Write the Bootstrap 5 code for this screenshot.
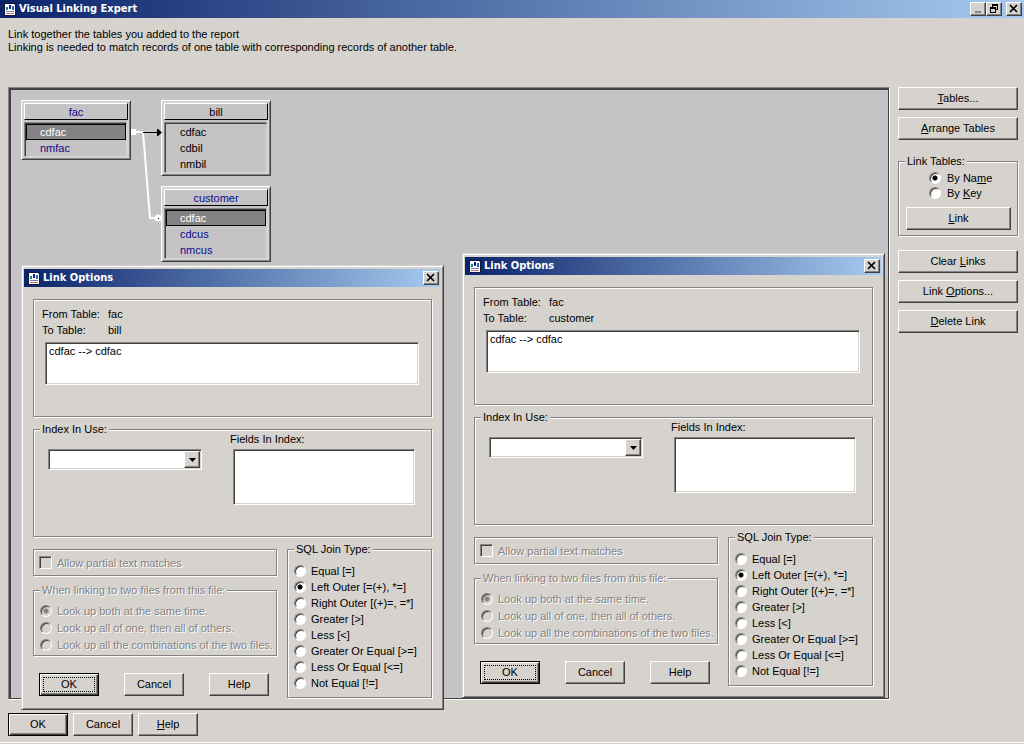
<!DOCTYPE html>
<html lang="en">
<head>
<meta charset="utf-8">
<meta name="viewport" content="width=device-width, initial-scale=1">
<title>Visual Linking Expert</title>
<link href="https://cdn.jsdelivr.net/npm/bootstrap@5.3.0/dist/css/bootstrap.min.css" rel="stylesheet">
<style>
:root { --face:#d6d3ce; --shade:#848284; --dark:#424142; --canvas:#c6c3c6; --navy:#0a0a8c; }
body { background:var(--face); color:#000; font:11px/14px "Liberation Sans", Arial, sans-serif; }
u { text-underline-offset:1px; }

/* title bars */
.title-bar { height:18px; background:linear-gradient(90deg,#0a246a,#a6caf0); color:#fff; font:bold 11px/18px "DejaVu Sans Condensed", sans-serif; }
.app-bar { padding:0 2px 0 4px; }
.title-icon { width:12px; height:13px; flex:none; margin-right:3px; }
.cap-btn { width:16px; height:14px; padding:0; border:1px solid; border-color:#fff var(--dark) var(--dark) #fff; background:var(--face); box-shadow:inset -1px -1px 0 var(--shade); display:flex; align-items:center; justify-content:center; }
.cap-btn svg { width:10px; height:10px; }

/* push buttons */
.push { height:23px; padding:0 4px; border:1px solid; border-color:#fff var(--dark) var(--dark) #fff; border-radius:0; background:var(--face); box-shadow:inset -1px -1px 0 var(--shade); color:#000; font:inherit; line-height:19px; text-align:center; }
.push-default { border-color:#000; box-shadow:inset 1px 1px 0 #fff, inset -1px -1px 0 var(--dark), inset -2px -2px 0 var(--shade); }
.push-focus { outline:1px dotted #000; outline-offset:-5px; }
.w-push { width:60px; }

/* etched frames */
.frame { min-width:0; margin:0; padding:0; border:1px solid var(--shade); box-shadow:1px 1px 0 #fff, inset 1px 1px 0 #fff; }
.frame > legend { float:none; width:auto; margin:0 0 0 6px; padding:0 2px; font:inherit; background:var(--face); }

/* sunken fields */
.sunken { border:1px solid; border-color:var(--shade) #fff #fff var(--shade); border-radius:0; background:#fff; box-shadow:inset 1px 1px 0 var(--dark), inset -1px -1px 0 var(--face); color:#000; font:inherit; appearance:none; outline:0; resize:none; display:block; }

/* radios and tick box */
.opt { display:flex; align-items:center; height:16px; gap:5px; }
.radio-dot { appearance:none; flex:none; width:12px; height:12px; margin:0; border:1px solid; border-color:var(--shade) #fff #fff var(--shade); border-radius:50%; background:#fff; box-shadow:inset 1px 1px 0 var(--dark); }
.radio-dot:checked { background:radial-gradient(circle at 50% 50%,#000 2px,#fff 3px); }
.radio-dot:disabled { background:var(--face); }
.radio-dot:disabled:checked { background:radial-gradient(circle at 50% 50%,var(--shade) 2px,var(--face) 3px); }
.tick { appearance:none; flex:none; width:13px; height:13px; margin:0; border:1px solid; border-color:var(--shade) #fff #fff var(--shade); box-shadow:inset 1px 1px 0 var(--dark); background:var(--face); }
.greyed { color:var(--shade); text-shadow:1px 1px 0 #fff; }

/* main areas */
.intro { padding:10px 8px 0; height:69px; line-height:13px; }
.workspace { padding:0 6px 0 8px; gap:8px; }
.board { min-height:613px; border:1px solid; border-color:var(--shade) #fff #fff var(--shade); box-shadow:inset 2px 2px 0 var(--dark), inset -1px -1px 0 var(--dark); background:var(--canvas); }
.side { width:120px; flex:none; gap:7px; }
.link-box { margin:7px 0; height:82px; }
.link-box .opt { height:15px; padding-left:30px; gap:6px; }
.link-box .push { width:calc(100% - 13px); margin:7px 0 0 7px; }
.link-box .choices { padding-top:2px; }
.footer-bar { padding:13px 8px 6px; border-bottom:1px solid #fff; margin-bottom:1px; gap:5px; }

/* table nodes on the board */
.node { position:absolute; width:110px; padding:2px; background:var(--canvas); border:1px solid; border-color:#fff var(--dark) var(--dark) #fff; box-shadow:inset 1px 1px 0 #d6d3ce, inset -1px -1px 0 var(--shade), inset 2px 2px 0 #d6d3ce, inset -3px -3px 0 #d6d3ce; color:#000; }
.node-own { color:var(--navy); }
.node-head { height:17px; border:1px solid; border-color:#fff #000 #000 #fff; line-height:16px; text-align:center; }
.node-list { list-style:none; margin:3px 1px 0; padding:0; border:1px solid; border-color:var(--dark) #d6d3ce #d6d3ce var(--dark); box-shadow:-1px -1px 0 var(--shade); }
.node-list li { height:16px; line-height:17px; padding-left:14px; }
.node-list .picked { background:var(--shade); color:#fff; outline:1px solid #000; outline-offset:-1px; }
.wires { position:absolute; left:1px; top:1px; width:280px; height:180px; }
.at-fac { left:12px; top:12px; } .at-bill { left:152px; top:12px; } .at-customer { left:152px; top:98px; }

/* dialogs floating over the board */
.dialog { position:absolute; width:423px; padding:2px; background:var(--face); border:1px solid; border-color:var(--face) var(--dark) var(--dark) var(--face); box-shadow:inset 1px 1px 0 #fff, inset -1px -1px 0 var(--shade); }
.at-left { left:12px; top:177px; } .at-right { left:453px; top:165px; }
.dialog .title-bar { margin:1px 1px 0 0; padding:0 1px 0 4px; }
.dialog-body { padding:12px 9px 9px; }
.pair-box { height:118px; padding:6px 12px 0 8px; }
.pair-box dl { display:grid; grid-template-columns:66px 1fr; line-height:16px; margin:0 0 4px; }
.pair-box dt { font-weight:normal; } .pair-box dd { margin:0; }
.pair-list { width:100%; height:43px; padding:0 3px; line-height:16px; }
.pair-wrap { padding-left:3px; }
.index-box { height:115px; margin-top:5px; }
.combo { width:154px; height:21px; padding:0; }
.combo-wrap { position:relative; margin:13px 0 0 14px; }
.combo-arrow { position:absolute; right:2px; top:2px; width:16px; height:17px; border:1px solid; border-color:#fff var(--dark) var(--dark) #fff; background:var(--face); box-shadow:inset -1px -1px 0 var(--shade); pointer-events:none; display:flex; align-items:center; justify-content:center; }
.fields-label { margin:-4px 0 3px -3px; }
.fields-list { width:182px; height:56px; padding:1px 4px; }
.lower { margin-top:5px; gap:10px; }
.partial { height:27px; margin-top:7px; padding:0 5px; }
.lookups { height:73px; margin-top:7px; }
.look-list { padding:5px 0 0 6px; }
.look-list .opt { height:17px; }
.dialog-buttons { padding:17px 8px 0 6px; }
.joins { width:145px; height:156px; }
.join-list { padding:7px 0 0 6px; }
</style>
</head>
<body class="d-flex flex-column min-vh-100">

<svg class="d-none">
  <symbol id="report-icon" viewBox="0 0 12 13"><path d="M0 0h12v13H0z" fill="#101840"/><path d="M1 1h9l1 1v10H1z" fill="#fff"/><path d="M2 4h2v3H2z" fill="#088a8a"/><path d="M5 2h2v4H5z" fill="#1020a0"/><path d="M8 3h2v4H8z" fill="#2468b0"/><path d="M2 8h8v1H2z" fill="#8478a8"/><path d="M2 10h8v1H2z" fill="#b87878"/></symbol>
  <symbol id="close-icon" viewBox="0 0 10 10"><path d="M1 1l7 7M8 1l-7 7" stroke="#000" stroke-width="1.700"/></symbol>
  <symbol id="drop-icon" viewBox="0 0 7 4"><path d="M0 0h7L3.500 4z"/></symbol>
</svg>

<header class="title-bar app-bar d-flex align-items-center">
  <svg class="title-icon"><use href="#report-icon"/></svg>
  <span class="flex-grow-1">Visual Linking Expert</span>
  <button type="button" class="cap-btn" aria-label="Minimize"><svg viewBox="0 0 10 10"><path d="M2 7h6v2H2z" fill="#848284"/></svg></button>
  <button type="button" class="cap-btn me-1" aria-label="Restore"><svg viewBox="0 0 10 10"><path d="M3 0h6v6H7V5h1V2H4v1H3zM1 3h6v6H1zM2 5v3h4V5z" fill-rule="evenodd"/></svg></button>
  <button type="button" class="cap-btn" aria-label="Close"><svg><use href="#close-icon"/></svg></button>
</header>

<div class="intro">
  <p class="m-0">Link together the tables you added to the report</p>
  <p class="m-0">Linking is needed to match records of one table with corresponding records of another table.</p>
</div>

<main class="workspace d-flex flex-grow-1">
  <section class="board flex-grow-1 position-relative">
    <div class="node node-own at-fac">
      <div class="node-head">fac</div>
      <ul class="node-list"><li class="picked">cdfac</li><li>nmfac</li></ul>
    </div>
    <div class="node at-bill">
      <div class="node-head">bill</div>
      <ul class="node-list"><li>cdfac</li><li>cdbil</li><li>nmbil</li></ul>
    </div>
    <div class="node node-own at-customer">
      <div class="node-head">customer</div>
      <ul class="node-list"><li class="picked">cdfac</li><li>cdcus</li><li>nmcus</li></ul>
    </div>
    <svg class="wires" viewBox="0 0 280 180">
      <path d="M121 40h5v6h-5z" fill="#fff"/>
      <path d="M125 43h8l7 86h6" fill="none" stroke="#fff" stroke-width="2"/>
      <path d="M133 43.500h15" stroke="#000"/>
      <path d="M147 40h1l4 3.500-4 3.500h-1z"/>
      <circle cx="148" cy="129" r="3.500" fill="#fff"/><path d="M148 129h1v1h-1z"/>
    </svg>

    <form class="dialog at-left">
      <div class="title-bar d-flex align-items-center">
        <svg class="title-icon"><use href="#report-icon"/></svg>
        <span class="flex-grow-1">Link Options</span>
        <button type="button" class="cap-btn" aria-label="Close"><svg><use href="#close-icon"/></svg></button>
      </div>
      <div class="dialog-body">
        <div class="frame pair-box">
          <dl><dt>From Table:</dt><dd>fac</dd><dt>To Table:</dt><dd>bill</dd></dl>
          <div class="pair-wrap"><textarea class="sunken pair-list" aria-label="Linked fields" readonly>cdfac --&gt; cdfac</textarea></div>
        </div>
        <fieldset class="frame index-box">
          <legend>Index In Use:</legend>
          <div class="d-flex justify-content-between align-items-start pe-3">
            <div class="combo-wrap">
              <select class="sunken combo" aria-label="Index in use"><option></option></select>
              <span class="combo-arrow"><svg width="7" height="4"><use href="#drop-icon"/></svg></span>
            </div>
            <div>
              <label class="fields-label d-block" for="fields-a">Fields In Index:</label>
              <textarea class="sunken fields-list" id="fields-a" readonly></textarea>
            </div>
          </div>
        </fieldset>
        <div class="lower d-flex">
          <div class="flex-grow-1">
            <div class="frame partial d-flex align-items-center">
              <label class="opt greyed"><input class="tick" type="checkbox" disabled>Allow partial text matches</label>
            </div>
            <fieldset class="frame lookups greyed" disabled>
              <legend>When linking to two files from this file:</legend>
              <div class="look-list">
                <label class="opt"><input class="radio-dot" type="radio" name="look" checked>Look up both at the same time.</label>
                <label class="opt"><input class="radio-dot" type="radio" name="look">Look up all of one, then all of others.</label>
                <label class="opt"><input class="radio-dot" type="radio" name="look">Look up all the combinations of the two files.</label>
              </div>
            </fieldset>
            <div class="dialog-buttons d-flex justify-content-between">
              <button type="button" class="push push-default push-focus w-push">OK</button>
              <button type="button" class="push w-push">Cancel</button>
              <button type="button" class="push w-push">Help</button>
            </div>
          </div>
          <fieldset class="frame joins">
            <legend>SQL Join Type:</legend>
            <div class="join-list">
              <label class="opt"><input class="radio-dot" type="radio" name="join">Equal [=]</label>
              <label class="opt"><input class="radio-dot" type="radio" name="join" checked>Left Outer [=(+), *=]</label>
              <label class="opt"><input class="radio-dot" type="radio" name="join">Right Outer [(+)=, =*]</label>
              <label class="opt"><input class="radio-dot" type="radio" name="join">Greater [&gt;]</label>
              <label class="opt"><input class="radio-dot" type="radio" name="join">Less [&lt;]</label>
              <label class="opt"><input class="radio-dot" type="radio" name="join">Greater Or Equal [&gt;=]</label>
              <label class="opt"><input class="radio-dot" type="radio" name="join">Less Or Equal [&lt;=]</label>
              <label class="opt"><input class="radio-dot" type="radio" name="join">Not Equal [!=]</label>
            </div>
          </fieldset>
        </div>
      </div>
    </form>

    <form class="dialog at-right">
      <div class="title-bar d-flex align-items-center">
        <svg class="title-icon"><use href="#report-icon"/></svg>
        <span class="flex-grow-1">Link Options</span>
        <button type="button" class="cap-btn" aria-label="Close"><svg><use href="#close-icon"/></svg></button>
      </div>
      <div class="dialog-body">
        <div class="frame pair-box">
          <dl><dt>From Table:</dt><dd>fac</dd><dt>To Table:</dt><dd>customer</dd></dl>
          <div class="pair-wrap"><textarea class="sunken pair-list" aria-label="Linked fields" readonly>cdfac --&gt; cdfac</textarea></div>
        </div>
        <fieldset class="frame index-box">
          <legend>Index In Use:</legend>
          <div class="d-flex justify-content-between align-items-start pe-3">
            <div class="combo-wrap">
              <select class="sunken combo" aria-label="Index in use"><option></option></select>
              <span class="combo-arrow"><svg width="7" height="4"><use href="#drop-icon"/></svg></span>
            </div>
            <div>
              <label class="fields-label d-block" for="fields-b">Fields In Index:</label>
              <textarea class="sunken fields-list" id="fields-b" readonly></textarea>
            </div>
          </div>
        </fieldset>
        <div class="lower d-flex">
          <div class="flex-grow-1">
            <div class="frame partial d-flex align-items-center">
              <label class="opt greyed"><input class="tick" type="checkbox" disabled>Allow partial text matches</label>
            </div>
            <fieldset class="frame lookups greyed" disabled>
              <legend>When linking to two files from this file:</legend>
              <div class="look-list">
                <label class="opt"><input class="radio-dot" type="radio" name="look" checked>Look up both at the same time.</label>
                <label class="opt"><input class="radio-dot" type="radio" name="look">Look up all of one, then all of others.</label>
                <label class="opt"><input class="radio-dot" type="radio" name="look">Look up all the combinations of the two files.</label>
              </div>
            </fieldset>
            <div class="dialog-buttons d-flex justify-content-between">
              <button type="button" class="push push-default push-focus w-push">OK</button>
              <button type="button" class="push w-push">Cancel</button>
              <button type="button" class="push w-push">Help</button>
            </div>
          </div>
          <fieldset class="frame joins">
            <legend>SQL Join Type:</legend>
            <div class="join-list">
              <label class="opt"><input class="radio-dot" type="radio" name="join">Equal [=]</label>
              <label class="opt"><input class="radio-dot" type="radio" name="join" checked>Left Outer [=(+), *=]</label>
              <label class="opt"><input class="radio-dot" type="radio" name="join">Right Outer [(+)=, =*]</label>
              <label class="opt"><input class="radio-dot" type="radio" name="join">Greater [&gt;]</label>
              <label class="opt"><input class="radio-dot" type="radio" name="join">Less [&lt;]</label>
              <label class="opt"><input class="radio-dot" type="radio" name="join">Greater Or Equal [&gt;=]</label>
              <label class="opt"><input class="radio-dot" type="radio" name="join">Less Or Equal [&lt;=]</label>
              <label class="opt"><input class="radio-dot" type="radio" name="join">Not Equal [!=]</label>
            </div>
          </fieldset>
        </div>
      </div>
    </form>
  </section>

  <aside class="side d-flex flex-column">
    <button type="button" class="push"><u>T</u>ables...</button>
    <button type="button" class="push"><u>A</u>rrange Tables</button>
    <fieldset class="frame link-box">
      <legend>Link Tables:</legend>
      <div class="choices">
        <label class="opt"><input class="radio-dot" type="radio" name="by" checked><span>By Na<u>m</u>e</span></label>
        <label class="opt"><input class="radio-dot" type="radio" name="by"><span>By <u>K</u>ey</span></label>
      </div>
      <button type="button" class="push"><u>L</u>ink</button>
    </fieldset>
    <button type="button" class="push">Clear <u>L</u>inks</button>
    <button type="button" class="push">Link <u>O</u>ptions...</button>
    <button type="button" class="push"><u>D</u>elete Link</button>
  </aside>
</main>

<footer class="footer-bar d-flex">
  <button type="button" class="push push-default w-push">OK</button>
  <button type="button" class="push w-push">Cancel</button>
  <button type="button" class="push w-push"><u>H</u>elp</button>
</footer>
<script src="https://cdn.jsdelivr.net/npm/bootstrap@5.3.0/dist/js/bootstrap.bundle.min.js"></script>
</body>
</html>
